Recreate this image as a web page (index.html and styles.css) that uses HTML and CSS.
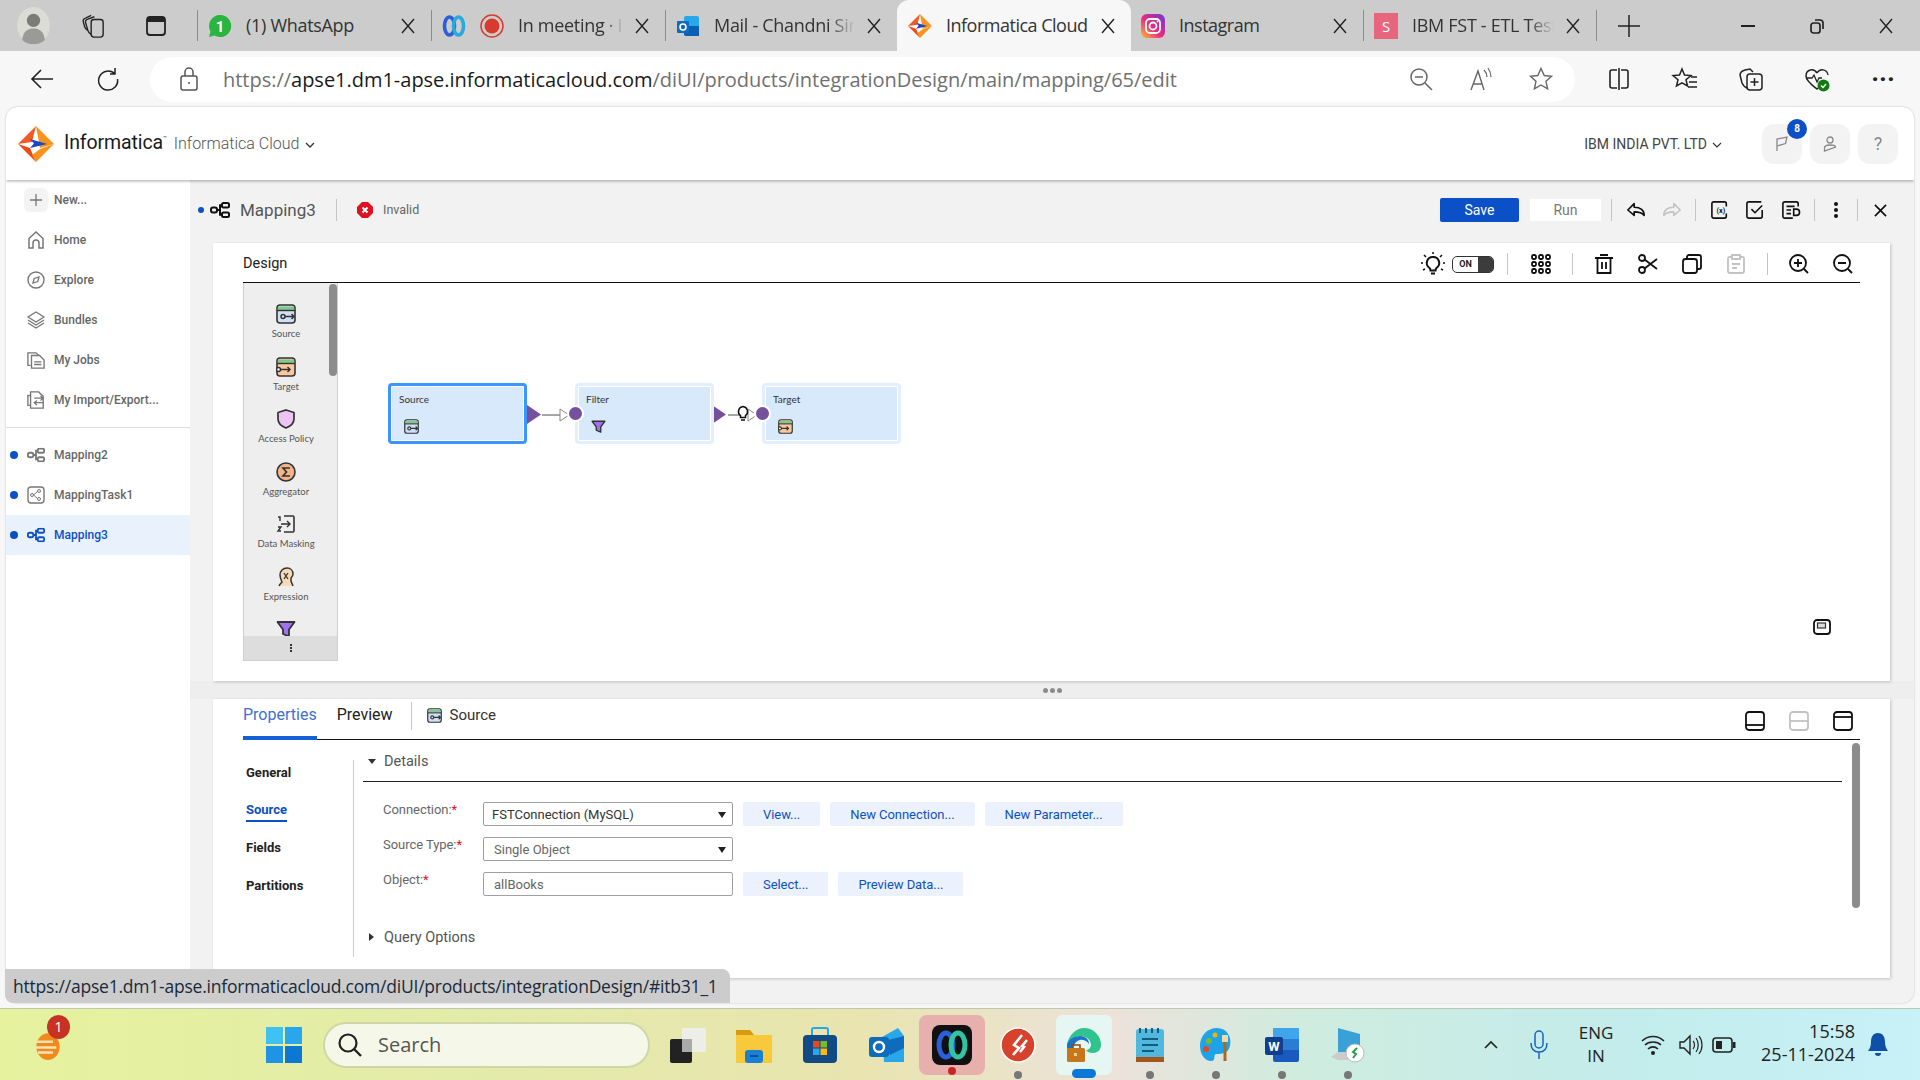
FILE: index.html
```html
<!DOCTYPE html>
<html lang="en">
<head>
<meta charset="utf-8">
<title>Informatica Cloud</title>
<link rel="stylesheet" href="styles.css">
</head>
<body>
<svg class="defs" aria-hidden="true">
  <symbol id="x" viewBox="0 0 16 16"><path d="M2 1l12 14M14 1L2 15" fill="none" stroke="#222" stroke-width="1.4"/></symbol>
  <symbol id="inf" viewBox="0 0 36 36"><path d="M18 0L36 18 22 22 18 0z" fill="#f7941d"/><path d="M18 0L0 18l14-2z" fill="#f15a22"/><path d="M0 18l18 18-6-14z" fill="#ee4b14"/><path d="M18 36l18-18-14 5-8 6z" fill="#f7941d"/><path d="M12 13l17 5-17 4 4-4.500z" fill="#1846c8"/></symbol>
  <symbol id="map" viewBox="0 0 20 16"><g fill="none" stroke="currentColor" stroke-width="2"><rect x="1" y="5.500" width="6" height="5" rx="2"/><rect x="12" y="1" width="7" height="4.500" rx="1.500"/><rect x="12" y="10.500" width="7" height="4.500" rx="1.500"/><path d="M7 8h3V3.200h2M10 8v4.800h2"/></g></symbol>
  <symbol id="src" viewBox="0 0 20 20"><rect x="1" y="1" width="18" height="18" rx="3" fill="#cfe0f5" stroke="#333" stroke-width="1.600"/><path d="M1.800 2.500h16.400v3.500H1.800z" fill="#7fc98f"/><path d="M1 6.500h18" stroke="#333" stroke-width="1.400"/><circle cx="7" cy="12.500" r="2" fill="none" stroke="#333" stroke-width="1.500"/><path d="M9 12.500h9M15.500 10l2.500 2.500-2.500 2.500" fill="none" stroke="#333" stroke-width="1.500"/></symbol>
  <symbol id="tgt" viewBox="0 0 20 20"><rect x="1" y="1" width="18" height="18" rx="3" fill="#f9c89e" stroke="#333" stroke-width="1.600"/><path d="M1.800 2.500h16.400v3.500H1.800z" fill="#7fc98f"/><path d="M1 6.500h18" stroke="#333" stroke-width="1.400"/><circle cx="2.500" cy="12.500" r="2" fill="#fff" stroke="#333" stroke-width="1.500"/><path d="M4.500 12.500H14M11.500 10l2.500 2.500-2.500 2.500" fill="none" stroke="#333" stroke-width="1.500"/></symbol>
  <symbol id="flt" viewBox="0 0 20 20"><path d="M1.500 3h17l-5.500 7.500v7l-6-2.500v-4.500z" fill="#a070f0" stroke="#333" stroke-width="1.800" stroke-linejoin="round"/></symbol>
</svg>

<header class="tabstrip">
  <div class="tab-tools">
    <svg class="avatar" viewBox="0 0 32 36"><ellipse cx="16" cy="18" rx="16" ry="18" fill="#dcdcd6"/><circle cx="16" cy="13" r="6.500" fill="#7b7b78"/><path d="M5 32c1-9 6-11 11-11s10 2 11 11c-3 3-7 4-11 4s-8-1-11-4z" fill="#9a9a96"/></svg>
    <svg class="i24 workspaces" viewBox="0 0 24 26"><g fill="none" stroke="#222" stroke-width="1.500"><rect x="10" y="6" width="13" height="19" rx="3"/><path d="M10 22c-2-1-3-2-3.500-4L4 9.500c-.5-2 .5-3.500 2.500-4l7-2.500M6.500 18c-2-1-3-2-3.500-4L1.500 8.500c-.5-2 .5-3.500 2.500-4L10 1.500"/></g></svg>
    <svg class="i24 vtabs" viewBox="0 0 24 24"><rect x="3" y="3" width="18" height="18" rx="3" fill="none" stroke="#222" stroke-width="1.800"/><path d="M3 5.500a2.500 2.500 0 012.500-2.500h13A2.500 2.500 0 0121 5.500V8H3z" fill="#222"/></svg>
  </div>
  <i class="tab-sep"></i>
  <div class="tab">
    <svg class="i24" viewBox="0 0 24 24"><path d="M12 1a11 11 0 00-9.500 16.500L1 23l5.700-1.500A11 11 0 1012 1z" fill="#2ab540"/><text x="12" y="18" class="svg-badge">1</text></svg>
    <span class="tab-title tab-title-gap">(1) WhatsApp</span>
    <svg class="tab-close"><use href="#x"/></svg>
  </div>
  <i class="tab-sep"></i>
  <div class="tab">
    <svg class="i24" viewBox="0 0 24 24"><g fill="none" stroke-width="3.600"><ellipse cx="7.500" cy="12" rx="5" ry="9" stroke="#2b5fd8"/><ellipse cx="16.500" cy="12" rx="5" ry="9" stroke="#28a9e0"/></g></svg>
    <svg class="i24 rec" viewBox="0 0 24 24"><circle cx="12" cy="12" r="11" fill="none" stroke="#d93a2e" stroke-width="1.500"/><circle cx="12" cy="12" r="7.500" fill="#d93a2e"/></svg>
    <span class="tab-title fade tab-title-gap">In meeting · I</span>
    <svg class="tab-close"><use href="#x"/></svg>
  </div>
  <i class="tab-sep"></i>
  <div class="tab tab-short">
    <svg class="i24" viewBox="0 0 24 24"><rect x="8" y="2" width="15" height="20" rx="2" fill="#28a8ea"/><path d="M8 12h15v10H10a2 2 0 01-2-2z" fill="#0a5fb4"/><rect x="1" y="7" width="12" height="12" rx="1" fill="#0f6cbd"/><circle cx="7" cy="13" r="3" fill="none" stroke="#fff" stroke-width="1.600"/></svg>
    <span class="tab-title fade tab-title-gap">Mail - Chandni Sin</span>
    <svg class="tab-close"><use href="#x"/></svg>
  </div>
  <div class="tab tab-active">
    <svg class="i24" viewBox="0 0 36 36"><use href="#inf"/></svg>
    <span class="tab-title tight tab-title-gap">Informatica Cloud</span>
    <svg class="tab-close"><use href="#x"/></svg>
  </div>
  <div class="tab tab-short2">
    <svg class="i24" viewBox="0 0 24 24"><defs><linearGradient id="ig" x1="0" y1="1" x2="1" y2="0"><stop offset="0" stop-color="#fdc02f"/><stop offset=".45" stop-color="#ee2a7b"/><stop offset="1" stop-color="#6a38dc"/></linearGradient></defs><rect width="24" height="24" rx="6" fill="url(#ig)"/><rect x="5" y="5" width="14" height="14" rx="4" fill="none" stroke="#fff" stroke-width="1.800"/><circle cx="12" cy="12" r="3.500" fill="none" stroke="#fff" stroke-width="1.800"/><circle cx="16.500" cy="7.500" r="1" fill="#fff"/></svg>
    <span class="tab-title tight tab-title-gap">Instagram</span>
    <svg class="tab-close"><use href="#x"/></svg>
  </div>
  <i class="tab-sep"></i>
  <div class="tab tab-short2">
    <span class="s-icon">S</span>
    <span class="tab-title fade tab-title-gap">IBM FST - ETL Test</span>
    <svg class="tab-close"><use href="#x"/></svg>
  </div>
  <i class="tab-sep"></i>
  <svg class="i24 new-tab" viewBox="0 0 24 24"><path d="M12 1v22M1 12h22" stroke="#222" stroke-width="1.500"/></svg>
  <div class="win-controls">
    <svg class="i16" viewBox="0 0 16 16"><path d="M1 8h14" stroke="#222" stroke-width="2"/></svg>
    <svg class="i16" viewBox="0 0 16 16"><rect x="2" y="5" width="9" height="10" rx="2.500" fill="none" stroke="#222" stroke-width="1.700"/><path d="M6 2h5a3 3 0 013 3v6" fill="none" stroke="#222" stroke-width="1.700"/></svg>
    <svg class="i16" viewBox="0 0 16 16"><use href="#x"/></svg>
  </div>
</header>

<nav class="addressbar">
  <div class="tool"><svg class="i24" viewBox="0 0 24 24"><path d="M23 12H2M11 3l-9 9 9 9" fill="none" stroke="#222" stroke-width="1.600"/></svg></div>
  <div class="tool"><svg class="i24" viewBox="0 0 24 24"><path d="M19 7A9.500 9.500 0 1021.500 12M19 1v6h-5" fill="none" stroke="#222" stroke-width="1.500"/></svg></div>
  <div class="omnibox">
    <svg class="i24 lock" viewBox="0 0 24 24"><rect x="4" y="9" width="16" height="14" rx="2" fill="none" stroke="#555" stroke-width="1.500"/><path d="M8 9V5a4 4 0 018 0v4" fill="none" stroke="#555" stroke-width="1.500"/><circle cx="12" cy="16" r="1" fill="#555"/></svg>
    <span class="url"><span class="url-dim">https://</span>apse1.dm1-apse.informaticacloud.com<span class="url-dim">/diUI/products/integrationDesign/main/mapping/65/edit</span></span>
    <div class="omni-tools">
      <svg class="i24" viewBox="0 0 24 24"><circle cx="10" cy="10" r="8" fill="none" stroke="#666" stroke-width="1.500"/><path d="M6 10h8M16 16l7 7" stroke="#666" stroke-width="1.500"/></svg>
      <svg class="i24" viewBox="0 0 24 24"><path d="M2 23L9 4l6 19M4.500 17h9" fill="none" stroke="#666" stroke-width="1.400"/><path d="M15 3c2 2 3 4 3 7M19 1c2 3 3 5 3 9" fill="none" stroke="#666" stroke-width="1.200"/></svg>
      <svg class="i24" viewBox="0 0 24 24"><path d="M12 1.500l3.200 7 7.300.8-5.500 5 1.600 7.500-6.600-3.800-6.600 3.800L7 14.300l-5.500-5 7.300-.8z" fill="none" stroke="#666" stroke-width="1.400"/></svg>
    </div>
  </div>
  <div class="tool tool-first"><svg class="i24" viewBox="0 0 24 24"><path d="M10 3H5a2 2 0 00-2 2v14a2 2 0 002 2h5M14 3h5a2 2 0 012 2v14a2 2 0 01-2 2h-5M12 1v22" fill="none" stroke="#222" stroke-width="1.600"/></svg></div>
  <div class="tool"><svg class="i24" viewBox="0 0 24 24"><path d="M9 2l2.500 6 6.500.5-5 4.300 1.500 6.200L9 15.800 3.500 19 5 12.800 0 8.500 6.500 8z" fill="none" stroke="#222" stroke-width="1.500"/><path d="M18 10h6M16 15h8M15 20h9" stroke="#222" stroke-width="1.500"/></svg></div>
  <div class="tool"><svg class="i24" viewBox="0 0 24 24"><rect x="8" y="7" width="15" height="16" rx="3" fill="none" stroke="#222" stroke-width="1.500"/><path d="M15.500 11v8M11.500 15h8M8 21c-3-1-4-3-5-5L1 8c0-2 2-4 5-5l5-1 3 3" fill="none" stroke="#222" stroke-width="1.500"/></svg></div>
  <div class="tool"><svg class="i24" viewBox="0 0 24 24"><path d="M12 6c-3-5-11-4-11 3 0 5 6 9 11 13 1-1 3-2 4-3" fill="none" stroke="#222" stroke-width="1.500"/><path d="M12 6c3-5 10-4 11 2M1 11h6l2-3 3 7 2-4h3" fill="none" stroke="#222" stroke-width="1.300"/><circle cx="18.500" cy="18.500" r="6" fill="#107c10"/><path d="M16 18.500l2 2 3-3.500" fill="none" stroke="#fff" stroke-width="1.400"/></svg></div>
  <div class="tool"><span class="more-dots">···</span></div>
</nav>

<div class="app">
  <div class="app-header">
    <svg class="logo" viewBox="0 0 36 36"><use href="#inf"/></svg>
    <span class="brand">Informatica<sup>™</sup></span>
    <span class="product">Informatica Cloud</span>
    <svg class="chev" viewBox="0 0 10 6"><path d="M1 1l4 4 4-4" fill="none" stroke="#333" stroke-width="1.300"/></svg>
    <span class="org">IBM INDIA PVT. LTD</span>
    <svg class="chev chev-org" viewBox="0 0 10 6"><path d="M1 1l4 4 4-4" fill="none" stroke="#333" stroke-width="1.100"/></svg>
    <div class="head-btn"><svg class="i16" viewBox="0 0 16 16"><path d="M3 15V3l10-2-1.500 6.500L3 10" fill="none" stroke="#888" stroke-width="1.300"/></svg><span class="badge">8</span></div>
    <div class="head-btn"><svg class="i16" viewBox="0 0 16 16"><circle cx="8" cy="4" r="3" fill="none" stroke="#888" stroke-width="1.300"/><path d="M2.500 15v-3c0-2 2-3 5.500-3s5.500 1 5.500 2l-11 4z" fill="none" stroke="#888" stroke-width="1.300"/></svg></div>
    <div class="head-btn head-help">?</div>
  </div>

  <div class="app-body">
    <aside class="sidebar">
      <div class="side-item"><span class="side-dot"></span><span class="new-box"><svg class="i16" viewBox="0 0 16 16"><path d="M8 2v12M2 8h12" stroke="#777" stroke-width="1.300"/></svg></span><span>New...</span></div>
      <div class="side-item"><span class="side-dot"></span><svg class="side-icon" viewBox="0 0 18 18"><path d="M2 17V7.500L9 1l7 6.500V17h-4v-5a3 3 0 00-6 0v5z" fill="none" stroke="#777" stroke-width="1.500"/></svg><span>Home</span></div>
      <div class="side-item"><span class="side-dot"></span><svg class="side-icon" viewBox="0 0 18 18"><circle cx="9" cy="9" r="8" fill="none" stroke="#777" stroke-width="1.400"/><path d="M6 12l1.200-4.500L12 6l-1.200 4.500z" fill="none" stroke="#777" stroke-width="1.300"/></svg><span>Explore</span></div>
      <div class="side-item"><span class="side-dot"></span><svg class="side-icon" viewBox="0 0 18 18"><path d="M9 1l8 5-8 5-8-5z" fill="none" stroke="#777" stroke-width="1.300"/><path d="M1 9l8 5 8-5M1 12l8 5 8-5" fill="none" stroke="#777" stroke-width="1.300"/></svg><span>Bundles</span></div>
      <div class="side-item"><span class="side-dot"></span><svg class="side-icon" viewBox="0 0 20 20"><path d="M4 16H1V2h9l3 3" fill="none" stroke="#777" stroke-width="1.500"/><path d="M5 5h9l5 5v9H5z" fill="none" stroke="#777" stroke-width="1.500"/><path d="M8 12h8M8 15h8" stroke="#777" stroke-width="1.400"/></svg><span>My Jobs</span></div>
      <div class="side-item"><span class="side-dot"></span><svg class="side-icon" viewBox="0 0 20 20"><path d="M4 16H1V5h3" fill="none" stroke="#777" stroke-width="1.500"/><path d="M4 19V1h9l5 5v13z" fill="none" stroke="#777" stroke-width="1.500"/><path d="M8 8h10M15 5.500L18 8l-3 2.500M18 13H8M11 10.500L8 13l3 2.500" fill="none" stroke="#777" stroke-width="1.300"/></svg><span>My Import/Export...</span></div>
      <div class="side-rule"></div>
      <div class="side-item"><span class="side-dot on"></span><svg class="side-icon" viewBox="0 0 20 16"><use href="#map"/></svg><span>Mapping2</span></div>
      <div class="side-item"><span class="side-dot on"></span><svg class="side-icon" viewBox="0 0 18 18"><rect x="1" y="1" width="16" height="16" rx="3" fill="none" stroke="#777" stroke-width="1.400"/><circle cx="5" cy="9" r="1.500" fill="none" stroke="#777"/><circle cx="12" cy="5" r="1.500" fill="none" stroke="#777"/><circle cx="12" cy="13" r="1.500" fill="none" stroke="#777"/><path d="M6.500 9L10.500 5.500M6.500 9l4 3.500" stroke="#777"/></svg><span>MappingTask1</span></div>
      <div class="side-item side-active"><span class="side-dot on"></span><svg class="side-icon" viewBox="0 0 20 16"><use href="#map"/></svg><span>Mapping3</span></div>
    </aside>

    <main class="main">
      <div class="toolbar">
        <span class="side-dot on doc-dot"></span>
        <svg class="doc-icon" viewBox="0 0 20 16"><use href="#map"/></svg>
        <span class="doc-name">Mapping3</span>
        <i class="vsep doc-sep"></i>
        <svg class="invalid-icon" viewBox="0 0 16 16"><path d="M5 0h6l5 5v6l-5 5H5l-5-5V5z" fill="#e0121f"/><path d="M5.500 5.500l5 5M10.500 5.500l-5 5" stroke="#fff" stroke-width="2"/></svg>
        <span class="invalid-text">Invalid</span>
        <button class="btn-save">Save</button>
        <button class="btn-run">Run</button>
        <i class="vsep sep-a"></i>
        <svg class="tb-icon undo" viewBox="0 0 22 18"><path d="M9 2L2 9l7 6v-4c4 0 8 0 11 4 0-6-4-9-11-9z" fill="none" stroke="#111" stroke-width="1.800" stroke-linejoin="round"/></svg>
        <svg class="tb-icon" viewBox="0 0 22 18"><path d="M13 2l7 7-7 6v-4c-4 0-8 0-11 4 0-6 4-9 11-9z" fill="none" stroke="#c4c4c4" stroke-width="1.800" stroke-linejoin="round"/></svg>
        <i class="vsep sep-b"></i>
        <svg class="tb-icon" viewBox="0 0 20 20"><path d="M17 14v3a2 2 0 01-2 2H3a2 2 0 01-2-2V3a2 2 0 012-2h12a2 2 0 012 2v3" fill="none" stroke="#111" stroke-width="1.800"/><text x="11" y="13" class="svg-fx">(x)</text></svg>
        <svg class="tb-icon" viewBox="0 0 20 20"><path d="M18 10v7a2 2 0 01-2 2H3a2 2 0 01-2-2V3a2 2 0 012-2h14M6 9l4 4 8-8" fill="none" stroke="#111" stroke-width="1.800"/></svg>
        <svg class="tb-icon" viewBox="0 0 20 20"><path d="M12 19H3a2 2 0 01-2-2V3a2 2 0 012-2h13a2 2 0 012 2v3M5 6h9M5 10h5M5 14h5" fill="none" stroke="#111" stroke-width="1.800"/><path d="M13 9h3a3 3 0 010 7h-3z" fill="none" stroke="#111" stroke-width="1.800"/></svg>
        <i class="vsep sep-c"></i>
        <svg class="tb-icon kebab" viewBox="0 0 6 18"><circle cx="3" cy="3" r="2" fill="#111"/><circle cx="3" cy="9" r="2" fill="#111"/><circle cx="3" cy="15" r="2" fill="#111"/></svg>
        <i class="vsep sep-d"></i>
        <svg class="tb-close" viewBox="0 0 14 14"><path d="M1 1l12 12M13 1L1 13" stroke="#111" stroke-width="1.800"/></svg>
      </div>

      <section class="panel design">
        <div class="design-head">
          <span class="design-title">Design</span>
          <svg class="dh-icon bulb" viewBox="0 0 24 24"><path d="M12 5a6 6 0 00-3.500 11c.7.7 1 1.300 1 2.500h5c0-1.200.3-1.800 1-2.500A6 6 0 0012 5zM10 21.500h4" fill="none" stroke="#111" stroke-width="2"/><path d="M12 0v2M3 3l2 2M21 3l-2 2M0 11h2M22 11h2M2 18l2-1M22 18l-2-1" stroke="#111" stroke-width="1.500"/></svg>
          <span class="toggle"><b>ON</b><i></i></span>
          <i class="vsep ds-a"></i>
          <svg class="dh-icon grid" viewBox="0 0 20 20"><g fill="none" stroke="#111" stroke-width="1.800"><rect x="1" y="1" width="4" height="4" rx="1.500"/><rect x="8" y="1" width="4" height="4" rx="1.500"/><rect x="15" y="1" width="4" height="4" rx="1.500"/><rect x="1" y="8" width="4" height="4" rx="1.500"/><rect x="8" y="8" width="4" height="4" rx="1.500"/><rect x="15" y="8" width="4" height="4" rx="1.500"/><rect x="1" y="15" width="4" height="4" rx="1.500"/><rect x="8" y="15" width="4" height="4" rx="1.500"/><rect x="15" y="15" width="4" height="4" rx="1.500"/></g></svg>
          <i class="vsep ds-b"></i>
          <svg class="dh-icon trash" viewBox="0 0 20 20"><path d="M1 4h18M6 1h8M3.500 4v15h13V4M8 8v7M12 8v7" fill="none" stroke="#111" stroke-width="1.800"/></svg>
          <svg class="dh-icon" viewBox="0 0 20 20"><g fill="none" stroke="#111" stroke-width="1.800"><circle cx="4" cy="4" r="3"/><circle cx="4" cy="16" r="3"/><path d="M6.500 5.500L19 15M6.500 14.500L19 5"/></g></svg>
          <svg class="dh-icon" viewBox="0 0 20 20"><rect x="1" y="5" width="14" height="14" rx="2.500" fill="none" stroke="#111" stroke-width="1.800"/><path d="M5 5V3a2 2 0 012-2h10a2 2 0 012 2v10a2 2 0 01-2 2h-2" fill="none" stroke="#111" stroke-width="1.800"/></svg>
          <svg class="dh-icon" viewBox="0 0 20 20"><path d="M6 3H3a1.500 1.500 0 00-1 1.500V17a2 2 0 002 2h12a2 2 0 002-2V4.500A1.500 1.500 0 0017 3h-3M6 1h8v4H6zM6 10h8M6 14h5" fill="none" stroke="#c2c2c2" stroke-width="1.800"/></svg>
          <i class="vsep ds-c"></i>
          <svg class="dh-icon" viewBox="0 0 20 20"><circle cx="9" cy="9" r="8" fill="none" stroke="#111" stroke-width="1.800"/><path d="M5 9h8M9 5v8M15 15l4 4" stroke="#111" stroke-width="1.800"/></svg>
          <svg class="dh-icon last" viewBox="0 0 20 20"><circle cx="9" cy="9" r="8" fill="none" stroke="#111" stroke-width="1.800"/><path d="M5 9h8M15 15l4 4" stroke="#111" stroke-width="1.800"/></svg>
        </div>
        <div class="design-body">
          <div class="palette">
            <div class="pal-item"><svg class="pal-icon"><use href="#src"/></svg><span>Source</span></div>
            <div class="pal-item"><svg class="pal-icon"><use href="#tgt"/></svg><span>Target</span></div>
            <div class="pal-item"><svg class="pal-icon" viewBox="0 0 20 20"><path d="M10 1l8 2.500V10c0 4-3 7-8 9-5-2-8-5-8-9V3.500z" fill="#eec4f5" stroke="#333" stroke-width="1.700"/></svg><span>Access Policy</span></div>
            <div class="pal-item"><svg class="pal-icon" viewBox="0 0 20 20"><circle cx="10" cy="10" r="9" fill="#f4b48a" stroke="#333" stroke-width="1.600"/><path d="M14 6H7l3.500 4L7 14h7" fill="none" stroke="#333" stroke-width="1.700"/></svg><span>Aggregator</span></div>
            <div class="pal-item"><svg class="pal-icon" viewBox="0 0 20 20"><path d="M8 2h9a1.500 1.500 0 011 1.500v13A1.500 1.500 0 0117 18H8" fill="none" stroke="#333" stroke-width="1.600"/><path d="M5 10h9M11 7l3 3-3 3M2 3h2v4M2 13h3l-3 4h3" fill="none" stroke="#333" stroke-width="1.400"/></svg><span>Data Masking</span></div>
            <div class="pal-item"><svg class="pal-icon" viewBox="0 0 20 20"><path d="M3 19c1-2 2-3 3-4-1-2-2-4-2-7 0-4 3-7 7-7s6 3 6 6c0 2-1 3-2 4v3l2 5" fill="#f7d9b5" stroke="#333" stroke-width="1.500"/><path d="M8 6l4 6M12 6l-4 6" fill="none" stroke="#333" stroke-width="1.300"/></svg><span>Expression</span></div>
            <div class="pal-item"><svg class="pal-icon"><use href="#flt"/></svg></div>
            <div class="pal-more"><i></i><i></i><i></i></div>
            <div class="pal-scroll"></div>
          </div>
          <div class="canvas">
            <svg class="links" viewBox="0 0 600 100">
              <path d="M189 12v19l14-9.500z" fill="#74509d"/>
              <path d="M204 22h18" stroke="#888" stroke-width="1.500"/>
              <path d="M222 16l9 6-9 6z" fill="#fff" stroke="#888"/>
              <path d="M374 12v19l14-9.500z" fill="#74509d"/>
              <path d="M390 22h18" stroke="#888" stroke-width="1.500"/>
              <path d="M410 16l9 6-9 6z" fill="#fff" stroke="#888"/>
            </svg>
            <div class="node node-src selected"><span>Source</span><svg class="node-icon"><use href="#src"/></svg></div>
            <div class="node node-flt"><span>Filter</span><svg class="node-icon"><use href="#flt"/></svg><i class="port"></i></div>
            <div class="node node-tgt"><span>Target</span><svg class="node-icon"><use href="#tgt"/></svg><i class="port"></i></div>
            <svg class="cursor-bulb" viewBox="0 0 12 16"><path d="M6 1a5 5 0 00-2.500 9v2h5v-2A5 5 0 006 1zM4 14.500h4" fill="#fff" stroke="#111" stroke-width="1.500"/></svg>
            <svg class="minimap" viewBox="0 0 18 16"><rect x="1" y="1" width="16" height="14" rx="3" fill="none" stroke="#111" stroke-width="1.800"/><rect x="4.500" y="4" width="8" height="5" fill="#ddd" stroke="#333" stroke-width="1.200"/></svg>
          </div>
        </div>
      </section>

      <div class="splitter"><i></i><i></i><i></i></div>

      <section class="panel props">
        <div class="props-tabs">
          <span class="ptab ptab-on">Properties</span>
          <span class="ptab">Preview</span>
          <i class="vsep ptab-sep"></i>
          <svg class="ptab-icon"><use href="#src"/></svg>
          <span class="ptab-src">Source</span>
          <svg class="lay-icon lay-a" viewBox="0 0 20 20"><rect x="1" y="1" width="18" height="18" rx="3" fill="none" stroke="#111" stroke-width="1.800"/><path d="M1 14h18" stroke="#111" stroke-width="1.800"/></svg>
          <svg class="lay-icon" viewBox="0 0 20 20"><rect x="1" y="1" width="18" height="18" rx="3" fill="none" stroke="#c2c2c2" stroke-width="1.800"/><path d="M1 10h18" stroke="#c2c2c2" stroke-width="1.800"/></svg>
          <svg class="lay-icon" viewBox="0 0 20 20"><rect x="1" y="1" width="18" height="18" rx="3" fill="none" stroke="#111" stroke-width="1.800"/><path d="M1 6h18" stroke="#111" stroke-width="1.800"/></svg>
        </div>
        <div class="props-body">
          <div class="props-nav">
            <div class="pnav">General</div>
            <div class="pnav pnav-on"><span>Source</span></div>
            <div class="pnav">Fields</div>
            <div class="pnav">Partitions</div>
          </div>
          <div class="props-form">
            <div class="section-head"><i class="tri-down"></i><span>Details</span></div>
            <div class="form-row">
              <label>Connection:<em>*</em></label>
              <div class="select select-dark">FSTConnection (MySQL)</div>
              <button class="btn-soft">View...</button>
              <button class="btn-soft">New Connection...</button>
              <button class="btn-soft">New Parameter...</button>
            </div>
            <div class="form-row">
              <label>Source Type:<em>*</em></label>
              <div class="select">Single Object</div>
            </div>
            <div class="form-row">
              <label>Object:<em>*</em></label>
              <div class="select no-arrow">allBooks</div>
              <button class="btn-soft">Select...</button>
              <button class="btn-soft">Preview Data...</button>
            </div>
            <div class="section-head closed"><i class="tri-right"></i><span>Query Options</span></div>
          </div>
          <div class="props-scroll"></div>
        </div>
      </section>
    </main>
  </div>
  <div class="status-url">https://apse1.dm1-apse.informaticacloud.com/diUI/products/integrationDesign/#itb31_1</div>
</div>

<footer class="taskbar">
  <div class="weather">
    <svg class="ti" viewBox="0 0 36 36"><ellipse cx="18" cy="20" rx="14" ry="16" fill="#f08a1d"/><path d="M4 14h20M2 21h26M6 27h18" stroke="#f6e2b5" stroke-width="3"/></svg>
    <span class="wbadge">1</span>
  </div>
  <div class="slot start"><svg class="ti" viewBox="0 0 36 36"><rect x="0" y="0" width="17" height="17" fill="#3fc2f2"/><rect x="19" y="0" width="17" height="17" fill="#2aa6ec"/><rect x="0" y="19" width="17" height="17" fill="#1f93e4"/><rect x="19" y="19" width="17" height="17" fill="#0c78d4"/></svg></div>
  <div class="search">
    <svg class="i24" viewBox="0 0 24 24"><circle cx="10" cy="10" r="8.500" fill="none" stroke="#222" stroke-width="2.200"/><path d="M16 16l7 7" stroke="#222" stroke-width="2.400"/></svg>
    <span>Search</span>
  </div>
  <div class="slot"><svg class="ti" viewBox="0 0 36 36"><rect x="0" y="12" width="22" height="24" rx="2" fill="#222"/><rect x="12" y="1" width="24" height="24" rx="2" fill="#eee" opacity=".9"/><rect x="12" y="12" width="10" height="13" fill="#aaa"/></svg></div>
  <div class="slot"><svg class="ti" viewBox="0 0 36 36"><path d="M0 3h14l4 5h18v28H0z" fill="#f8c93a"/><path d="M0 3h14l4 5H0z" fill="#d99a13"/><rect x="9" y="23" width="18" height="13" rx="3" fill="#1a80d4"/><path d="M14 29h8" stroke="#0b4f94" stroke-width="2"/></svg></div>
  <div class="slot"><svg class="ti" viewBox="0 0 36 36"><rect x="1" y="8" width="34" height="28" rx="4" fill="#124a85"/><path d="M10 8V3a2 2 0 012-2h12a2 2 0 012 2v5" fill="none" stroke="#2aa6ec" stroke-width="2"/><rect x="11" y="14" width="6.500" height="6.500" fill="#e8481c"/><rect x="18.500" y="14" width="6.500" height="6.500" fill="#7db927"/><rect x="11" y="21.500" width="6.500" height="6.500" fill="#2aa6ec"/><rect x="18.500" y="21.500" width="6.500" height="6.500" fill="#fdb813"/></svg></div>
  <div class="slot"><svg class="ti" viewBox="0 0 36 36"><path d="M14 10L30 1l6 8v26H16z" fill="#28a8ea"/><path d="M16 14l20-5v12L22 28z" fill="#0f6cbd"/><rect x="1" y="10" width="20" height="20" rx="3" fill="#0f6cbd"/><circle cx="11" cy="20" r="5" fill="none" stroke="#fff" stroke-width="2.400"/></svg></div>
  <div class="slot webex"><svg class="ti-lg" viewBox="0 0 40 40"><rect width="40" height="40" rx="8" fill="#111"/><g fill="none" stroke-width="5"><ellipse cx="14" cy="20" rx="7" ry="12" stroke="#2a5fd8"/><ellipse cx="26" cy="20" rx="7" ry="12" stroke="#2fc5a3"/></g></svg><i class="run-dot red"></i></div>
  <div class="slot"><svg class="ti" viewBox="0 0 36 36"><circle cx="18" cy="18" r="17" fill="#d6422c" stroke="#fff" stroke-width="1.500"/><path d="M22 8l-8 10 5 3-6 7M27 13l-5 6 2 1-4 5" fill="none" stroke="#fff" stroke-width="2.600"/></svg><i class="run-dot"></i></div>
  <div class="slot edge"><svg class="ti" viewBox="0 0 36 36"><path d="M18 1a17 17 0 0117 17c0 5-4 8-8 8-3 0-6-1-7-3 2 0 5-2 5-5 0-6-6-9-11-9-6 0-11 4-13 8C3 8 10 1 18 1z" fill="#2fc48e"/><path d="M1 17c2-5 7-8 13-8 6 0 9 4 9 8-2-3-6-5-9-4-5 1-7 6-6 11 1 5 5 9 10 10C8 35 0 28 1 17z" fill="#1a73c8"/><rect x="1" y="21" width="18" height="14" rx="1.500" fill="#c7761b"/><path d="M6 21v-3h8v3" fill="none" stroke="#8a4f10" stroke-width="1.600"/><rect x="8" y="26" width="3" height="3" fill="#f4d27a"/></svg><i class="run-bar"></i></div>
  <div class="slot"><svg class="ti" viewBox="0 0 36 36"><rect x="4" y="2" width="28" height="32" rx="3" fill="#4fb8dc"/><path d="M8 1v5M14 1v5M20 1v5M26 1v5" stroke="#175a80" stroke-width="2"/><path d="M10 12h16M10 18h16M10 24h12" stroke="#175a80" stroke-width="2"/><rect x="4" y="30" width="28" height="5" fill="#a4561c"/></svg><i class="run-dot"></i></div>
  <div class="slot"><svg class="ti" viewBox="0 0 36 36"><path d="M19 1C9 1 2 9 2 19c0 9 6 16 12 15 4-1 1-6 4-7 5 0 12 0 14-8C34 10 29 1 19 1z" fill="#1fa3e8"/><circle cx="11" cy="14" r="3" fill="#7cb82f"/><circle cx="8" cy="22" r="3" fill="#e8481c"/><circle cx="17" cy="8" r="2.500" fill="#f4b400"/><path d="M27 14v20" stroke="#a86a22" stroke-width="3"/><rect x="24" y="8" width="6" height="7" fill="#f0d9a8"/></svg><i class="run-dot"></i></div>
  <div class="slot"><svg class="ti" viewBox="0 0 36 36"><rect x="9" y="1" width="26" height="34" rx="2" fill="#185abd"/><rect x="9" y="1" width="26" height="11" fill="#41a5ee"/><rect x="9" y="12" width="26" height="11" fill="#2b7cd3"/><rect x="1" y="10" width="18" height="18" rx="2" fill="#103f91"/><text x="10" y="24" class="svg-w">W</text></svg><i class="run-dot"></i></div>
  <div class="slot"><svg class="ti" viewBox="0 0 36 36"><path d="M8 1l22 6v19H8z" fill="#3aa0d8"/><path d="M1 30l7-5h16l-2 8H8z" fill="#ccc"/><circle cx="25" cy="26" r="9" fill="#fff" stroke="#bbb"/><path d="M27 21l-4 4 3 2-3 4" fill="none" stroke="#24a148" stroke-width="2"/></svg><i class="run-dot"></i></div>
  <div class="tray">
    <div class="tray-slot w48"><svg class="i16" viewBox="0 0 16 16"><path d="M2 11l6-6 6 6" fill="none" stroke="#222" stroke-width="1.600"/></svg></div>
    <div class="tray-slot w48"><svg class="mic" viewBox="0 0 18 30"><rect x="5" y="1" width="8" height="17" rx="4" fill="none" stroke="#1565c0" stroke-width="1.500"/><path d="M1 13c0 6 3 9 8 9s8-3 8-9M9 22v7" fill="none" stroke="#1565c0" stroke-width="1.500"/></svg></div>
    <div class="tray-slot w66 lang"><span>ENG</span><span>IN</span></div>
    <div class="tray-slot w48"><svg class="i24" viewBox="0 0 24 24"><path d="M1 8c6-6 16-6 22 0M4 12c4-4 12-4 16 0M7 16c3-2.500 7-2.500 10 0" fill="none" stroke="#222" stroke-width="1.600"/><circle cx="12" cy="20" r="2" fill="#222"/></svg></div>
    <div class="tray-slot w26"><svg class="i24" viewBox="0 0 24 24"><path d="M2 9v6h4l6 6V3L6 9z" fill="none" stroke="#222" stroke-width="1.400"/><path d="M15 8c2 2 2 6 0 8M18 5c3 4 3 10 0 14M21 3c4 5 4 13 0 18" fill="none" stroke="#222" stroke-width="1.200"/></svg></div>
    <div class="tray-slot w42"><svg class="i24" viewBox="0 0 24 24"><rect x="1" y="5" width="19" height="14" rx="3" fill="none" stroke="#222" stroke-width="1.600"/><rect x="4" y="8" width="6" height="8" fill="#222"/><rect x="21" y="9" width="2.500" height="6" fill="#222"/></svg></div>
    <div class="clock"><span>15:58</span><span>25-11-2024</span></div>
    <svg class="bell" viewBox="0 0 20 26"><path d="M10 1c-5 0-7 4-7 9 0 4-1 6-3 9h20c-2-3-3-5-3-9 0-5-2-9-7-9z" fill="#0f4fa8"/><path d="M7 21h6a3 3 0 01-6 0z" fill="#0f4fa8"/></svg>
  </div>
</footer>
</body>
</html>
```
FILE: styles.css
```css
* { box-sizing: border-box; }
html, body { margin: 0; height: 1080px; overflow: hidden; }
body { display: flex; flex-direction: column; font-family: Roboto, "Liberation Sans", sans-serif; background: #f7f7f7; position: relative; }
.defs { position: absolute; width: 0; height: 0; }
i { display: block; font-style: normal; }
svg { display: block; flex: none; overflow: visible; }
button { font-family: inherit; border: 0; padding: 0; }
.i24 { width: 24px; height: 24px; }
.i16 { width: 16px; height: 16px; }

/* tab strip */
.tabstrip { height: 51px; background: #cccccc; display: flex; align-items: center; flex: none; font-family: "Open Sans", sans-serif; }
.tab-tools { width: 197px; display: flex; align-items: center; padding-left: 17px; }
.avatar { width: 33px; height: 37px; }
.workspaces { margin-left: 31px; }
.vtabs { margin-left: 39px; }
.tab-sep { width: 1px; height: 31px; background: #8c8c8c; flex: none; }
.tab { width: 233px; height: 51px; display: flex; align-items: center; padding: 0 15px 0 10px; color: #333; font-size: 18px; flex: none; }
.tab-short { width: 231px; }
.tab-short2 { width: 232px; }
.tab-active { width: 234px; background: #f7f7f7; border-radius: 12px 12px 0 0; padding-left: 11px; }
.rec { margin-left: 14px; }
.tab-title { flex: 1; min-width: 0; white-space: nowrap; overflow: hidden; letter-spacing: -.3px; margin-top: -2px; }
.tight { letter-spacing: -.5px; }
.tab-title-gap { margin-left: 14px; margin-right: 8px; }
.fade { -webkit-mask-image: linear-gradient(90deg, #000 80%, transparent 98%); mask-image: linear-gradient(90deg, #000 80%, transparent 98%); }
.tab-close { width: 16px; height: 16px; flex: none; }
.s-icon { width: 24px; height: 26px; background: #e8657e; color: #fff; font-size: 15px; display: flex; align-items: center; justify-content: center; flex: none; }
.new-tab { margin-left: 20px; }
.win-controls { margin-left: auto; display: flex; gap: 53px; padding-right: 26px; }

/* address bar */
.addressbar { height: 56px; flex: none; display: flex; align-items: center; background: #f7f7f7; }
.tool { width: 66px; height: 46px; display: flex; align-items: center; justify-content: center; flex: none; }
.tool:first-child { margin-left: 9px; }
.tool-first { margin-left: 11px; }
.omnibox { margin-left: 9px; width: 1425px; height: 45px; background: #fff; border-radius: 23px; display: flex; align-items: center; padding-left: 27px; font-family: "Open Sans", sans-serif; }
.lock { width: 24px; height: 24px; }
.url { margin-left: 22px; font-size: 20px; color: #1a1a1a; white-space: nowrap; letter-spacing: -.02px; }
.url-dim { color: #707070; }
.omni-tools { margin-left: auto; display: flex; gap: 36px; padding-right: 22px; }
.more-dots { font-size: 26px; font-weight: 700; color: #222; line-height: 1; }
.svg-badge { font: 700 15px Roboto, sans-serif; fill: #fff; text-anchor: middle; }
.svg-w { font: 700 13px Roboto, sans-serif; fill: #fff; text-anchor: middle; }
.svg-fx { font: 700 8px Roboto, sans-serif; fill: #111; text-anchor: middle; }

/* app */
.app { flex: none; height: 896px; margin-left: 6px; width: 1908px; border-radius: 12px; background: #f2f2f2; display: flex; flex-direction: column; box-shadow: 0 0 2px rgba(0,0,0,.25); overflow: hidden; }
.app-header { height: 73px; flex: none; background: #fff; display: flex; align-items: center; padding-left: 12px; box-shadow: 0 1px 3px rgba(0,0,0,.35); position: relative; z-index: 2; }
.logo { width: 36px; height: 36px; }
.brand { margin-left: 10px; font-size: 19.500px; color: #1a1a1a; letter-spacing: -.1px; margin-top: -2px; }
.brand sup { font-size: 6px; vertical-align: 9px; line-height: 0; }
.product { margin-left: 7px; font-size: 16px; font-weight: 300; color: #555; }
.chev { width: 10px; height: 6px; margin-left: 6px; margin-top: 2px; }
.org { margin-left: auto; font-size: 14px; color: #444; }
.chev-org { margin-left: 5px; margin-right: 40px; }
.head-btn { width: 40px; height: 40px; margin-right: 8px; border-radius: 12px; background: #f3f3f3; display: flex; align-items: center; justify-content: center; position: relative; }
.head-help { font-size: 18px; color: #888; margin-right: 16px; }
.badge { position: absolute; top: -5px; right: -5px; width: 20px; height: 20px; border-radius: 50%; background: #0b50c6; color: #fff; font-size: 10px; font-weight: 700; display: flex; align-items: center; justify-content: center; }

.app-body { flex: 1; display: flex; min-height: 0; }
.sidebar { width: 184px; flex: none; background: #fff; color: #666; font-size: 12px; font-weight: 500; }
.side-item { height: 40px; display: flex; align-items: center; }
.side-dot { width: 8px; height: 8px; border-radius: 50%; margin-left: 4px; flex: none; }
.side-dot.on { background: #0b50c6; }
.side-icon { width: 18px; height: 18px; margin-left: 9px; margin-right: 9px; color: #777; }
.new-box { width: 24px; height: 24px; margin-left: 6px; margin-right: 6px; background: #f3f3f3; border-radius: 6px; display: flex; align-items: center; justify-content: center; }
.side-rule { height: 1px; background: #ddd; margin: 7px 0 7px; }
.side-active { background: #e9f1fc; color: #0b50c6; }
.side-active .side-icon { color: #0b50c6; }

.main { flex: 1; min-width: 0; display: flex; flex-direction: column; }
.toolbar { height: 60px; flex: none; display: flex; align-items: center; padding-left: 8px; padding-right: 23px; }
.doc-dot { width: 6px; height: 6px; margin-left: 0; margin-top: -1px; }
.doc-icon { width: 20px; height: 16px; margin-left: 6px; margin-top: -1px; color: #111; }
.doc-name { margin-left: 10px; font-size: 17px; color: #555; width: 76px; white-space: nowrap; }
.vsep { width: 1px; background: #c4c4c4; height: 22px; flex: none; }
.doc-sep { margin-left: 20px; }
.invalid-icon { width: 16px; height: 16px; margin-left: 20px; }
.invalid-text { margin-left: 10px; font-size: 12.500px; color: #666; margin-top: -1px; }
.btn-save { margin-left: auto; width: 79px; height: 24px; background: #0b50c6; border-radius: 2px; color: #fff; font-size: 14px; }
.btn-run { margin-left: 11px; width: 71px; height: 22px; background: #fff; color: #777; font-size: 14px; }
.sep-a { margin-left: 10px; }
.tb-icon { width: 20px; height: 18px; margin-left: 16px; }
.undo { margin-left: 14px; }
.sep-b { margin-left: 13px; }
.sep-b + .tb-icon { margin-left: 14px; }
.sep-b + .tb-icon + .tb-icon { margin-left: 15px; }
.sep-c { margin-left: 13px; }
.kebab { width: 6px; margin-left: 18px; }
.sep-d { margin-left: 18px; }
.tb-close { width: 13px; height: 13px; margin-left: 16px; margin-right: 4px; }

.panel { background: #fff; margin: 0 24px 0 23px; box-shadow: 1px 1px 3px rgba(0,0,0,.2); padding: 0 30px; flex: none; position: relative; }
.design { margin-top: 3px; height: 438px; }
.design-head { height: 40px; display: flex; align-items: center; border-bottom: 1px solid #111; padding-top: 3px; }
.design-title { font-size: 14.500px; color: #222; margin-right: auto; margin-top: -2px; }
.dh-icon { width: 20px; height: 20px; margin-left: 24px; }
.last { margin-right: 7px; }
.bulb { width: 24px; height: 24px; margin-left: 0; }
.toggle { width: 42px; height: 17px; margin-left: 7px; border: 1px solid #333; border-radius: 5px; display: flex; overflow: hidden; background: #fff; }
.toggle b { width: 25px; font-size: 9px; line-height: 15px; text-align: center; color: #222; }
.toggle i { flex: 1; background: #3c3c3c; }
.ds-a { margin-left: 13px; }
.ds-a + .dh-icon { margin-left: 23px; }
.ds-b { margin-left: 21px; }
.ds-b + .dh-icon { margin-left: 21px; }
.ds-c { margin-left: 21px; }
.ds-c + .dh-icon { margin-left: 21px; }
.design-body { height: 378px; display: flex; }
.palette { width: 95px; height: 378px; flex: none; background: #eeeeee; border: 1px solid #cfcfcf; border-top: 0; position: relative; padding: 21px 9px 0 0; overflow: hidden; font-family: Lato, sans-serif; }
.pal-item { height: 52.500px; display: flex; flex-direction: column; align-items: center; color: #555; font-size: 9.500px; gap: 4px; white-space: nowrap; }
.pal-icon { width: 20px; height: 20px; }
.pal-more { position: absolute; left: 0; right: 0; bottom: 0; height: 24px; background: #dddddd; display: flex; flex-direction: column; align-items: center; justify-content: center; gap: 1px; }
.pal-more i { width: 2px; height: 2px; background: #333; }
.pal-scroll { position: absolute; right: 0; top: 1px; width: 8px; height: 92px; border-radius: 4px; background: #8c8c8c; }
.canvas { flex: 1; position: relative; font-family: Lato, sans-serif; }
.links { position: absolute; left: 0; top: 110px; width: 600px; height: 100px; }
.node { position: absolute; top: 100px; width: 139px; height: 61px; background: #d7e9fb; border: 3px solid #e2f0fd; border-radius: 4px; font-size: 10px; color: #333; padding: 7px 0 0 8px; box-shadow: inset 0 0 0 1px #fff; }
.node span { display: block; }
.selected { border-color: #3b97ff; }
.node-src { left: 50px; }
.node-flt { left: 237px; }
.node-tgt { left: 424px; }
.node-icon { width: 15px; height: 15px; position: absolute; left: 13px; top: 33px; }
.port { position: absolute; left: -11px; top: 19px; width: 17px; height: 17px; border-radius: 50%; background: #74509d; border: 2.500px solid #fff; }
.cursor-bulb { position: absolute; left: 399px; top: 122px; width: 12px; height: 17px; }
.minimap { position: absolute; right: 29px; bottom: 26px; width: 18px; height: 16px; }

.splitter { height: 18px; flex: none; display: flex; align-items: center; justify-content: center; gap: 2px; background: #eeeeee; }
.splitter i { width: 5px; height: 5px; border-radius: 50%; background: #8c8c8c; }

.props { height: 279px; }
.props-tabs { height: 41px; display: flex; align-items: center; border-bottom: 1.500px solid #111; }
.ptab { height: 41px; line-height: 32px; font-size: 16px; color: #222; margin-right: 20px; border-bottom: 4px solid transparent; margin-bottom: -1px; }
.ptab-on { color: #3f6fd1; border-bottom-color: #1560d4; }
.ptab-sep { height: 28px; margin-right: 15px; margin-top: -6px; margin-left: -2px; }
.ptab-icon { width: 15px; height: 15px; margin-top: -8px; }
.ptab-src { font-size: 15px; color: #333; margin-left: 8px; margin-top: -8px; }
.lay-icon { width: 20px; height: 20px; margin-left: 24px; margin-top: 4px; }
.lay-a { margin-left: auto; }
.lay-icon:last-child { margin-right: 7px; }
.props-body { display: flex; position: relative; }
.props-nav { width: 111px; height: 197px; margin-top: 20px; padding-left: 3px; border-right: 1px solid #ccc; flex: none; font-size: 13px; font-weight: 700; color: #222; }
.pnav { height: 37.500px; display: flex; align-items: center; }
.pnav:first-child { margin-top: -6px; }
.pnav-on { color: #0b50c6; }
.pnav-on span { border-bottom: 2px solid #0b50c6; padding-bottom: 3px; margin-top: 3px; }
.props-form { flex: 1; margin-left: 9px; margin-right: 18px; font-size: 13px; color: #666; }
.section-head { height: 42px; border-bottom: 1px solid #222; display: flex; align-items: center; font-size: 14.500px; color: #555; padding: 2px 0 0 5px; margin-bottom: 20px; }
.closed { border-bottom: 0; margin: 26px 0 0; height: 28px; }
.tri-down { width: 0; height: 0; border: 4px solid transparent; border-top: 5px solid #333; border-bottom: 0; margin-right: 8px; }
.tri-right { width: 0; height: 0; border: 4px solid transparent; border-left: 5px solid #333; border-right: 0; margin-left: 1px; margin-right: 10px; }
.form-row { height: 24px; display: flex; align-items: center; margin-bottom: 11px; padding-left: 20px; }
.form-row label { width: 100px; flex: none; margin-top: -10px; letter-spacing: -.05px; }
.form-row em { color: #e0121f; font-style: normal; }
.select { width: 250px; height: 24px; flex: none; border: 1px solid #a0a0a0; border-radius: 2px; display: flex; align-items: center; padding-left: 10px; color: #666; background: #fff; position: relative; margin-right: 10px; }
.select-dark { color: #333; padding-left: 8px; }
.select::after { content: ""; position: absolute; right: 6px; top: 9px; border: 4px solid transparent; border-top: 6px solid #222; border-bottom: 0; }
.no-arrow::after { display: none; }
.btn-soft { height: 24px; padding: 0 20px; margin-right: 10px; background: #ebf2fd; color: #0b50c6; font-size: 13px; border-radius: 2px; letter-spacing: -.06px; }
.props-scroll { position: absolute; right: 0; top: 3px; width: 8px; height: 165px; border-radius: 4px; background: #8c8c8c; }

.status-url { position: absolute; left: 5px; top: 969px; width: 725px; height: 34px; background: #cccccc; border-radius: 0 8px 0 8px; z-index: 5; color: #1a2a3a; font: 17.500px "Open Sans", sans-serif; line-height: 34px; padding-left: 8px; letter-spacing: -.22px; white-space: nowrap; }

/* taskbar */
.taskbar { margin-top: 5px; height: 72px; flex: none; display: flex; align-items: center; background: linear-gradient(90deg, #e6f29e 0%, #e3eba9 25%, #e9e4b0 45%, #ece2da 58%, #cfecdf 68%, #c3ecec 85%, #c8f1f8 100%); border-top: 1px solid #bcc9b0; font-family: "Open Sans", sans-serif; position: relative; }
.weather { width: 251px; padding-left: 33px; position: relative; }
.weather .ti { width: 30px; height: 36px; }
.wbadge { position: absolute; left: 47px; top: -12px; width: 23px; height: 24px; border-radius: 50%; background: #c83224; color: #fff; font-size: 14px; display: flex; align-items: center; justify-content: center; }
.slot { width: 66px; height: 72px; flex: none; display: flex; align-items: center; justify-content: center; position: relative; }
.ti { width: 36px; height: 36px; }
.ti-lg { width: 40px; height: 40px; }
.search { width: 327px; height: 46px; margin-left: 6px; margin-right: 5px; background: #f5f8e8; border: 2px solid #cfd7a6; border-radius: 24px; display: flex; align-items: center; padding-left: 13px; gap: 16px; font-size: 20px; color: #555; flex: none; }
.webex { height: 60px; background: #e8b0ac; border-radius: 8px; }
.webex .run-dot.red { bottom: 0; background: #c8252b; }
.edge::before { content: ""; position: absolute; left: 5px; right: 5px; top: 6px; bottom: 6px; background: #e6f6f3; border-radius: 6px; }
.edge .ti { position: relative; }
.run-dot { position: absolute; left: 29px; bottom: 2px; width: 8px; height: 8px; border-radius: 50%; background: #777; }
.run-bar { position: absolute; left: 21px; bottom: 3px; width: 24px; height: 9px; border-radius: 5px; background: #0b78d8; z-index: 1; }
.tray { margin-left: auto; display: flex; align-items: center; padding-right: 27px; }
.tray-slot { display: flex; align-items: center; justify-content: center; flex: none; }
.w48 { width: 48px; }
.w66 { width: 66px; }
.w26 { width: 26px; }
.w42 { width: 42px; }
.mic { width: 18px; height: 30px; }
.lang { flex-direction: column; font-size: 17px; color: #222; line-height: 23px; margin-top: -2px; }
.clock { width: 110px; display: flex; flex-direction: column; align-items: flex-end; font-size: 18px; color: #222; line-height: 23px; margin-top: -3px; }
.bell { width: 20px; height: 26px; margin-left: 13px; margin-right: 5px; }
```
